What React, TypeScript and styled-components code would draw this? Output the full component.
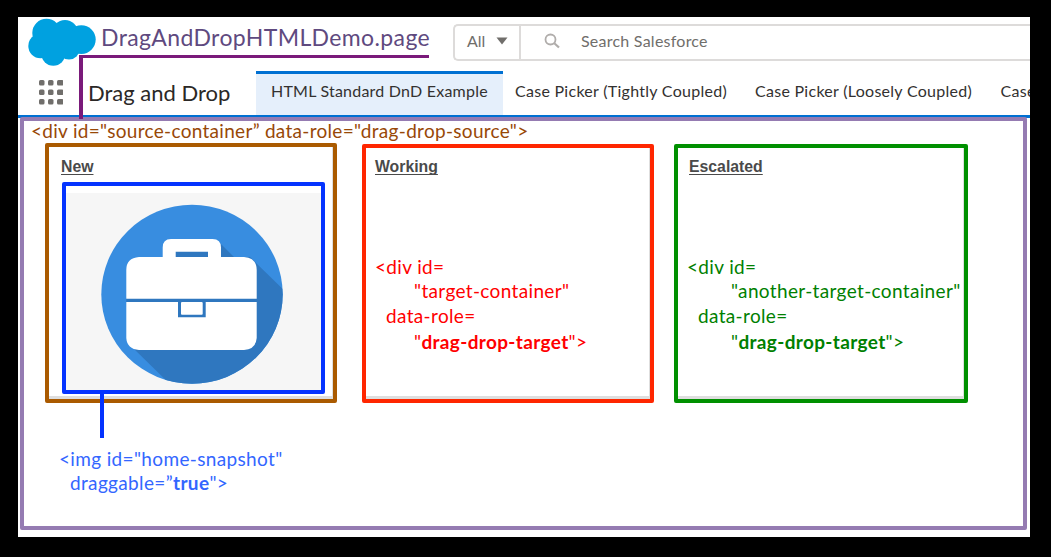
import React from 'react';
import styled, { createGlobalStyle } from 'styled-components';

const GlobalStyle = createGlobalStyle`
  * { box-sizing: border-box; }
  body { margin: 0; background: #000; }
`;

const Page = styled.main`
  width: 1051px;
  height: 557px;
  padding: 17px 21px 20px 18px;
  background: #000;
  font-family: Lato, sans-serif;
`;

const Frame = styled.div`
  position: relative;
  display: flex;
  flex-direction: column;
  height: 520px;
  overflow: hidden;
  background: #fff;
`;

const GlobalHeader = styled.header`
  display: flex;
  flex: none;
  height: 54px;
  padding: 1px 0 0 10px;
`;

const PageTitle = styled.h1`
  width: 353px;
  margin: 6px 0 0 5px;
  color: #5f4a7f;
  font-size: 23px;
  font-weight: 400;
  line-height: 27px;
  letter-spacing: 0.38px;
  white-space: nowrap;
`;

const SearchBar = styled.div`
  display: flex;
  flex: 1;
  height: 37px;
  margin: 6px 0 0 -1px;
  border: 2px solid #dddbda;
  border-right: 0;
  border-radius: 5px 0 0 5px;
  color: #706e6b;
  font-size: 16px;
  line-height: 20px;
`;

const Scope = styled.div`
  display: flex;
  align-items: center;
  gap: 11px;
  width: 66px;
  padding: 0 0 3px 12px;
  border-right: 2px solid #dddbda;
`;

const Query = styled.div`
  display: flex;
  align-items: center;
  gap: 20px;
  padding: 0 0 3px 23px;
  letter-spacing: 0.24px;
`;

const NavBar = styled.nav`
  display: flex;
  flex: none;
  height: 47px;
  padding-left: 21px;
  border-bottom: 3px solid #0070d2;
`;

const Launcher = styled.svg`
  flex: none;
  margin-top: 9px;
`;

const AppName = styled.div`
  flex: none;
  width: 168px;
  margin-left: 25px;
  color: #2b2826;
  font-size: 22px;
  line-height: 44px;
`;

const Tab = styled.div<{ $active?: boolean; $width: number }>`
  flex: none;
  width: ${(p) => p.$width}px;
  padding-left: ${(p) => (p.$active ? 15 : 12)}px;
  border-top: 3px solid ${(p) => (p.$active ? '#0070d2' : 'transparent')};
  background: ${(p) => (p.$active ? '#e5effb' : 'transparent')};
  color: #333130;
  font-size: 16px;
  line-height: 34px;
  letter-spacing: ${(p) => (p.$active ? 0.22 : 0.28)}px;
  white-space: nowrap;
`;

const Board = styled.section`
  width: 1007px;
  height: 413px;
  margin: -1px 0 0 2px;
  border: 4px solid #957bb2;
  border-radius: 2px;
`;

const Code = styled.div<{ $color: string }>`
  color: ${(p) => p.$color};
  font-size: 19px;
  letter-spacing: 0.35px;
  white-space: nowrap;
`;

const CodeLine = styled.div<{ $indent: number; $height?: number }>`
  padding-left: ${(p) => p.$indent}px;
  line-height: ${(p) => p.$height ?? 24.5}px;
`;

const SourceLabel = styled(Code)`
  padding-left: 7px;
  line-height: 20px;
  letter-spacing: 0.3px;
`;

const Columns = styled.div`
  display: flex;
  align-items: flex-start;
  margin: 2px 0 0 21px;
`;

const Card = styled.article<{ $color: string; $width: number; $gap?: number; $top?: number }>`
  width: ${(p) => p.$width}px;
  height: ${(p) => 260 - (p.$top ?? 0)}px;
  margin: ${(p) => p.$top ?? 0}px ${(p) => p.$gap ?? 0}px 0 0;
  padding-top: ${(p) => 10.5 - (p.$top ?? 0)}px;
  border: 4px solid ${(p) => p.$color};
  border-radius: 2px;
  box-shadow: inset -1px -3px 0 #dedede;
`;

const CardTitle = styled.h2<{ $inset: number }>`
  margin: 0 0 0 ${(p) => p.$inset}px;
  color: #4a4a4a;
  font: bold 15.8px/18px 'Liberation Sans', Arial, sans-serif;
  text-decoration: underline;
  text-decoration-thickness: 1px;
  text-decoration-skip-ink: none;
  text-underline-offset: 2px;
`;

const TargetCode = styled(Code)`
  margin-top: 79px;
`;

const Snapshot = styled.div`
  width: 263px;
  height: 212px;
  margin: 6px 0 0 13px;
  padding-top: 7px;
  border: 4px solid #0433ff;
  border-radius: 2px;
  background: #fff;
`;

const Picture = styled.svg`
  display: block;
  background: #f6f6f6;
`;

const ImageCode = styled(Code)`
  margin-top: 43.5px;
`;

const Connector = styled.div<{ $color: string; $x: number; $y: number; $w: number; $h: number }>`
  position: absolute;
  left: ${(p) => p.$x}px;
  top: ${(p) => p.$y}px;
  width: ${(p) => p.$w}px;
  height: ${(p) => p.$h}px;
  background: ${(p) => p.$color};
`;

const Cloud = () => (
  <svg width="68" height="49" viewBox="28 18 68 49" fill="#00a1e0">
    <circle cx="46.5" cy="33" r="14.2" />
    <circle cx="65" cy="33" r="13" />
    <circle cx="81.3" cy="39.6" r="14.4" />
    <circle cx="40.5" cy="46" r="12.2" />
    <circle cx="53.3" cy="53.7" r="12" />
    <circle cx="69" cy="49" r="10.6" />
    <path d="M38 38L50 27L80 32L80 50L66 56L44 56Z" />
  </svg>
);

const Briefcase = () => (
  <Picture width="255" height="197" viewBox="66 193 255 197">
    <defs>
      <clipPath id="disc">
        <ellipse cx="192" cy="294.2" rx="90.7" ry="89.5" />
      </clipPath>
    </defs>
    <g clipPath="url(#disc)">
      <rect x="100" y="203" width="185" height="182" fill="#388de0" />
      <path d="M219 242L234 257L250 257L290 296V390H176L133 348L126.300 303V298L170 250H219Z" fill="#2f77bf" />
    </g>
    <path
      fill="#fff"
      fillRule="evenodd"
      d="M162.700 257V247.500Q162.700 239 171 239H212.500Q221 239 221 247.500V257H244Q256.700 258 256.700 270V298.700H126.300V270Q126.300 258 139 257ZM175.700 251.700V257H208V251.700Z"
    />
    <path fill="#fff" d="M126.300 302H178V317.300H205.700V302H256.700V338Q256 349 244 350H139Q127 349 126.300 338Z" />
    <rect x="181" y="302" width="21.700" height="12.700" rx="1" fill="#fff" />
  </Picture>
);

const dots = [0, 1, 2].flatMap((r) => [0, 1, 2].map((c) => [c, r]));

export default function App() {
  return (
    <>
      <GlobalStyle />
      <Page>
        <Frame>
          <GlobalHeader>
            <Cloud />
            <PageTitle>DragAndDropHTMLDemo.page</PageTitle>
            <SearchBar>
              <Scope>
                All
                <svg width="12" height="8" viewBox="0 0 12 8">
                  <path d="M0.500 0.500H11.500L6 7.500Z" fill="#706e6b" />
                </svg>
              </Scope>
              <Query>
                <svg width="17" height="16" viewBox="0 0 17 16" fill="none" stroke="#b0adab" strokeWidth="1.800">
                  <circle cx="6.500" cy="6.500" r="5" />
                  <path d="M10.300 10.200L15 14.500" strokeWidth="2.200" />
                </svg>
                Search Salesforce
              </Query>
            </SearchBar>
          </GlobalHeader>

          <NavBar>
            <Launcher width="24" height="25" viewBox="0 0 24 25" fill="#706e6b">
              {dots.map(([c, r]) => (
                <rect key={`${c}${r}`} x={c * 9} y={r * 9.5} width={c === 2 ? 6.5 : 5.5} height="5.500" rx="1.500" />
              ))}
            </Launcher>
            <AppName>Drag and Drop</AppName>
            <Tab $active $width={247}>HTML Standard DnD Example</Tab>
            <Tab $width={240}>Case Picker (Tightly Coupled)</Tab>
            <Tab $width={245.5}>Case Picker (Loosely Coupled)</Tab>
            <Tab $width={50}>Case</Tab>
          </NavBar>

          <Board>
            <SourceLabel $color="#984807">{'<div id="source-container” data-role="drag-drop-source">'}</SourceLabel>
            <Columns>
              <Card $color="#aa5a00" $width={292} $gap={25}>
                <CardTitle $inset={12}>New</CardTitle>
                <Snapshot>
                  <Briefcase />
                </Snapshot>
              </Card>
              <Card $color="#ff2600" $width={292} $gap={20} $top={1}>
                <CardTitle $inset={9}>Working</CardTitle>
                <TargetCode $color="#ff0000">
                  <CodeLine $indent={9}>{'<div id='}</CodeLine>
                  <CodeLine $indent={48}>"target-container"</CodeLine>
                  <CodeLine $indent={20}>data-role=</CodeLine>
                  <CodeLine $indent={48} $height={27.5}>
                    "<b>drag-drop-target</b>{'">'}
                  </CodeLine>
                </TargetCode>
              </Card>
              <Card $color="#009000" $width={294} $top={1}>
                <CardTitle $inset={11}>Escalated</CardTitle>
                <TargetCode $color="#008000">
                  <CodeLine $indent={9}>{'<div id='}</CodeLine>
                  <CodeLine $indent={53}>"another-target-container"</CodeLine>
                  <CodeLine $indent={20}>data-role=</CodeLine>
                  <CodeLine $indent={53} $height={27.5}>
                    "<b>drag-drop-target</b>{'">'}
                  </CodeLine>
                </TargetCode>
              </Card>
            </Columns>
            <ImageCode $color="#3366ff">
              <CodeLine $indent={35} $height={24}>{'<img id="home-snapshot"'}</CodeLine>
              <CodeLine $indent={46} $height={24}>
                draggable=”<b>true</b>{'">'}
              </CodeLine>
            </ImageCode>
          </Board>

          <Connector $color="#7a1a7a" $x={61} $y={38} $w={350} $h={3} />
          <Connector $color="#7a1a7a" $x={61} $y={38} $w={4} $h={64} />
          <Connector $color="#0433ff" $x={82} $y={375} $w={4} $h={46} />
        </Frame>
      </Page>
    </>
  );
}
